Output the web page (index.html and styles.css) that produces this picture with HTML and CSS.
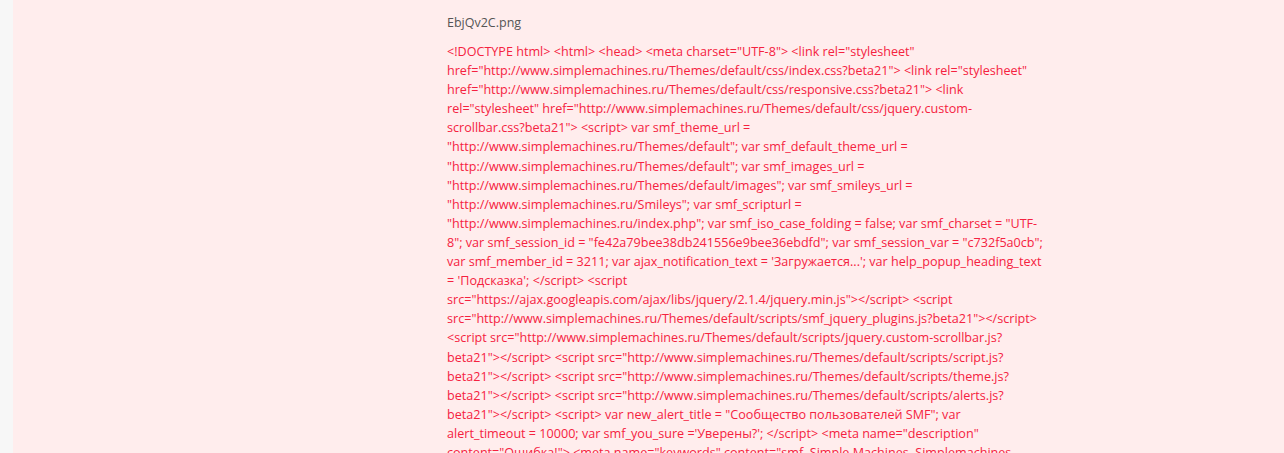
FILE: index.html
```html
<!DOCTYPE html>
<html lang="ru">
<head>
<meta charset="UTF-8">
<title>EbjQv2C.png</title>
<link rel="stylesheet" href="styles.css">
</head>
<body>
<div class="page">
  <div class="strip"></div>
  <main class="content">
    <div class="filename">EbjQv2C.png</div>
    <div class="code">
      <span class="ln">&lt;!DOCTYPE html&gt; &lt;html&gt; &lt;head&gt; &lt;meta charset="UTF-8"&gt; &lt;link rel="stylesheet"</span>
      <span class="ln">href="http://www.simplemachines.ru/Themes/default/css/index.css?beta21"&gt; &lt;link rel="stylesheet"</span>
      <span class="ln">href="http://www.simplemachines.ru/Themes/default/css/responsive.css?beta21"&gt; &lt;link</span>
      <span class="ln">rel="stylesheet" href="http://www.simplemachines.ru/Themes/default/css/jquery.custom-</span>
      <span class="ln">scrollbar.css?beta21"&gt; &lt;script&gt; var smf_theme_url =</span>
      <span class="ln">"http://www.simplemachines.ru/Themes/default"; var smf_default_theme_url =</span>
      <span class="ln">"http://www.simplemachines.ru/Themes/default"; var smf_images_url =</span>
      <span class="ln">"http://www.simplemachines.ru/Themes/default/images"; var smf_smileys_url =</span>
      <span class="ln">"http://www.simplemachines.ru/Smileys"; var smf_scripturl =</span>
      <span class="ln">"http://www.simplemachines.ru/index.php"; var smf_iso_case_folding = false; var smf_charset = "UTF-</span>
      <span class="ln">8"; var smf_session_id = "fe42a79bee38db241556e9bee36ebdfd"; var smf_session_var = "c732f5a0cb";</span>
      <span class="ln">var smf_member_id = 3211; var ajax_notification_text = 'Загружается...'; var help_popup_heading_text</span>
      <span class="ln">= 'Подсказка'; &lt;/script&gt; &lt;script</span>
      <span class="ln">src="https://ajax.googleapis.com/ajax/libs/jquery/2.1.4/jquery.min.js"&gt;&lt;/script&gt; &lt;script</span>
      <span class="ln">src="http://www.simplemachines.ru/Themes/default/scripts/smf_jquery_plugins.js?beta21"&gt;&lt;/script&gt;</span>
      <span class="ln">&lt;script src="http://www.simplemachines.ru/Themes/default/scripts/jquery.custom-scrollbar.js?</span>
      <span class="ln">beta21"&gt;&lt;/script&gt; &lt;script src="http://www.simplemachines.ru/Themes/default/scripts/script.js?</span>
      <span class="ln">beta21"&gt;&lt;/script&gt; &lt;script src="http://www.simplemachines.ru/Themes/default/scripts/theme.js?</span>
      <span class="ln">beta21"&gt;&lt;/script&gt; &lt;script src="http://www.simplemachines.ru/Themes/default/scripts/alerts.js?</span>
      <span class="ln">beta21"&gt;&lt;/script&gt; &lt;script&gt; var new_alert_title = "Сообщество пользователей SMF"; var</span>
      <span class="ln">alert_timeout = 10000; var smf_you_sure ='Уверены?'; &lt;/script&gt; &lt;meta name="description"</span>
      <span class="ln">content="Ошибка!"&gt; &lt;meta name="keywords" content="smf, Simple Machines, Simplemachines,</span>
    </div>
  </main>
</div>
</body>
</html>
```

FILE: styles.css
```css
html, body {
  margin: 0;
  padding: 0;
}
body {
  background: #ffeded;
  font-family: "Open Sans", "Noto Sans", sans-serif;
  height: 453px;
  overflow: hidden;
}
.page {
  display: flex;
  min-height: 453px;
}
.strip {
  width: 13px;
  flex: none;
  background: #f7f7f7;
}
.content {
  padding-left: 434px;
  padding-top: 13px;
}
.filename {
  color: #555555;
  font-size: 12.5px;
  line-height: 19px;
  margin-bottom: 10px;
}
.code {
  color: #f5223f;
  font-size: 12.6px;
  line-height: 19.1px;
}
.ln {
  display: block;
  white-space: nowrap;
}
```
